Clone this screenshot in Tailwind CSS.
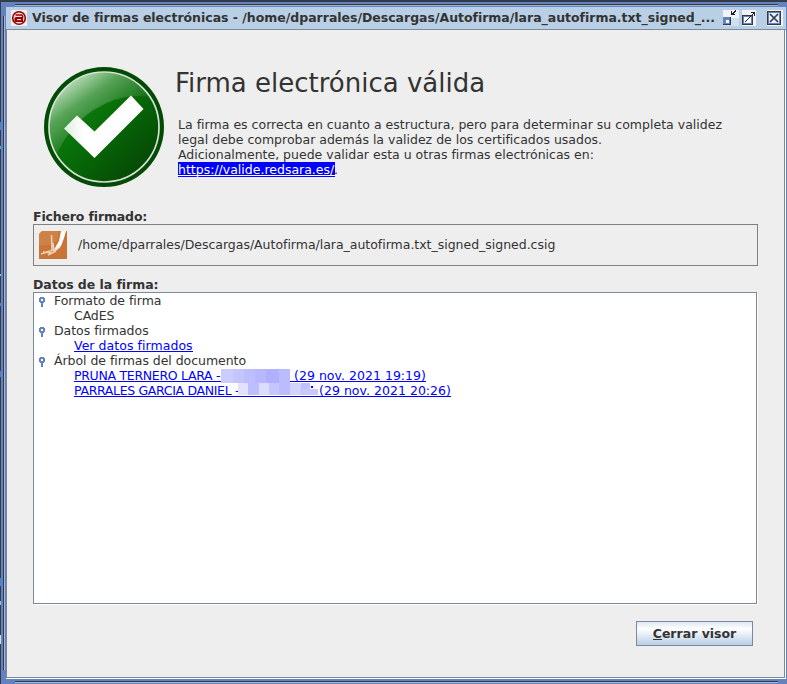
<!DOCTYPE html>
<html lang="es"><head><meta charset="utf-8"><title>Visor de firmas electrónicas</title>
<script src="https://cdn.jsdelivr.net/npm/@tailwindcss/browser@4"></script></head>
<body class="w-[787px] h-[684px] overflow-hidden bg-[#333a48] pl-px pt-0.5 font-['DejaVu_Sans',sans-serif] text-[12.5px] leading-[15px] text-[#333] whitespace-nowrap">
<!-- desktop visible beside the window -->
<div class="absolute left-0 top-0 w-px h-[684px]">
  <i class="absolute top-[122px] w-px h-[8px] bg-[#3f86d0]"></i><i class="absolute top-[146px] w-px h-[3px] bg-[#5aa5dd]"></i>
  <i class="absolute top-[274px] w-px h-[2px] bg-[#7fd4f0]"></i><i class="absolute top-[303px] w-px h-[3px] bg-[#3f86d0]"></i>
  <i class="absolute top-[371px] w-px h-[6px] bg-[#3f86d0]"></i><i class="absolute top-[578px] w-px h-[8px] bg-[#3f86d0]"></i>
  <i class="absolute top-[601px] w-px h-[4px] bg-[#7fc4f0]"></i><i class="absolute top-[635px] w-px h-[9px] bg-[#ddd]"></i>
</div>
<div class="relative w-[786px] h-[682px] bg-[#6382bf] pl-[5px] pt-[5px]">
  <div class="absolute left-[14px] right-[9px] top-[2px] h-[2px] bg-[#333a48] border-b border-[#a3b8cc]"></div>
  <div class="absolute left-[14px] right-[9px] bottom-[1px] h-[2px] bg-[#333a48] border-b border-[#a3b8cc]"></div>
  <div class="absolute left-[2px] top-[14px] bottom-[14px] w-[2px] bg-[#333a48] border-r border-[#a3b8cc]"></div>
  <div class="w-[780px] h-[672px] bg-[#eee] flex flex-col border-r border-b border-white">
    <header class="h-[23px] shrink-0 bg-[#b8cfe5] border-b border-[#7a8a99] flex items-center pl-[5px] -mr-px font-bold">
      <svg class="w-4 h-4 shrink-0" viewBox="0 0 16 16"><path fill="#eee" d="M0 0h16v16H0z"/><circle cx="8" cy="8" r="6.3" fill="#f5dede" stroke="#980000" stroke-width="1.6"/><path d="M4.5 5h5.8q1.3 0 1.3 1.3V8" fill="none" stroke="#980000" stroke-width="1.5"/><path d="M5 7h7v5H4.8Q3.5 12 3.5 10.5V8.5Q3.5 7 5 7Z" fill="#980000"/><path d="M6 9.6h4" stroke="#eee" stroke-width="1.1"/></svg>
      <span class="ml-[5px] w-[685px] mb-px tracking-[-0.02px]">Visor de firmas electrónicas - /home/dparrales/Descargas/Autofirma/lara_autofirma.txt_signed_...</span>
      <svg class="w-4 h-4 ml-[6px] shrink-0" viewBox="0 0 16 16" shape-rendering="crispEdges"><path fill="#cfdff0" d="M0 0h16v16H0z"/><path fill="#eef4fa" d="M0 0h16v8H0z"/><path fill="#333a48" d="M0 7h8v8H0z"/><path fill="#6382bf" d="M0 7h7v2H1v5H0z"/><path fill="#6382bf" d="M1 9h6v5H1z"/><path fill="#fff" d="M3 10h3v3H3z"/><path fill="#222" d="M8 1h1v4H8zM8 4h4v1H8zM9 3h2v1H9zM10 2h2v1h-2zM11 1h2v1h-2zM12 0h1v1h-1z"/></svg>
      <svg class="w-4 h-4 ml-[3px] shrink-0" viewBox="0 0 16 16" shape-rendering="crispEdges"><path fill="#eef4fa" d="M0 0h14v16H0z"/><path fill="#333a48" d="M0 5h11v10H0z"/><path fill="#6382bf" d="M1 6h9v8H1z"/><path fill="#fff" d="M2 7h7v6H2z"/><path fill="#222" d="M3 11h1v1H3zM4 10h1v1H4zM5 9h1v1H5zM6 8h1v1H6zM7 7h1v1H7zM8 6h1v1H8zM9 5h1v1H9zM10 4h1v1h-1zM11 3h1v1h-1zM9 2h4v1H9zM12 2h1v4h-1z"/></svg>
      <svg class="w-4 h-4 ml-[9px] shrink-0" viewBox="0 0 16 16" shape-rendering="crispEdges"><path fill="#eef4fa" d="M0 0h16v16H0z"/><path fill="#333a48" d="M0 1h14v14H0z"/><path fill="#6382bf" d="M1 2h12v12H1z"/><path fill="#e8f0f8" d="M2 3h10v10H2z"/><path d="M3 4l8 8M11 4l-8 8" stroke="#333a48" stroke-width="1.700" shape-rendering="auto"/></svg>
    </header>
    <main class="flex flex-col h-[648px] border-l border-b border-r border-[#7a8a99] px-[26px]">
      <section class="flex h-[179px] pt-[36px] shrink-0">
        <svg class="w-[122px] h-[122px] ml-[10px] shrink-0" viewBox="0 0 122 122">
          <defs><linearGradient id="g" x1="0" y1="0" x2="1" y2="1"><stop offset="0" stop-color="#1a901a"/><stop offset=".45" stop-color="#087008"/><stop offset="1" stop-color="#043c04"/></linearGradient>
          <linearGradient id="h" x1=".1" y1=".05" x2=".65" y2=".7"><stop offset="0" stop-color="#fff" stop-opacity=".85"/><stop offset=".45" stop-color="#fff" stop-opacity=".3"/><stop offset="1" stop-color="#fff" stop-opacity="0"/></linearGradient>
          <linearGradient id="k" x1="0" y1="0" x2="1" y2="0"><stop offset="0" stop-color="#dfeedf"/><stop offset=".25" stop-color="#fff"/></linearGradient></defs>
          <circle cx="61" cy="61" r="60" fill="#034a05"/>
          <circle cx="61" cy="61" r="55" fill="url(#g)"/>
          <path d="M14 88A54 54 0 0 1 7 67 54 54 0 0 1 106 31Q78 26 49 45 26 61 14 88Z" fill="url(#h)"/>
          <circle cx="61" cy="61" r="55" fill="none" stroke="#d5e2d5" stroke-width="1.700"/>
          <path d="M21 62.500 34 49.500 51.500 65.500 88 29.500 100.500 43 51.500 92Z" fill="url(#k)"/>
        </svg>
        <div class="pl-[10px]">
          <h1 class="pt-px text-[26px] leading-[32px]">Firma electrónica válida</h1>
          <div class="mt-[18px] pl-[3px]">
            <p class="tracking-[0.02px]">La firma es correcta en cuanto a estructura, pero para determinar su completa validez</p>
            <p>legal debe comprobar además la validez de los certificados usados.</p>
            <p>Adicionalmente, puede validar esta u otras firmas electrónicas en:</p>
            <p class="flex"><a class="relative block w-[157px] h-[15px] bg-[#00f] text-white">https://valide.redsara.es/<i class="absolute left-0 top-[13px] w-full h-px bg-white"></i></a><span class="-ml-px">.</span></p>
          </div>
        </div>
      </section>
      <p class="font-bold tracking-[-0.15px] shrink-0">Fichero firmado:</p>
      <div class="w-[725px] h-[42px] shrink-0 border border-[#808080] flex items-center pl-[5px]">
        <svg class="w-7 h-7 shrink-0" viewBox="0 0 28 28"><path fill="#c87537" d="M3 0h25v28H0V3Z"/><path fill="#d38a50" d="M3 0h17l-2 10Q8 16 0 14V3Z" opacity=".6"/><path fill="#fff" d="M22 0h5l-2 7-3 8-5 4-1-2 4-7Z"/><path d="M12.500 4l.5 15M14 12l1 8M2 23l9-3 8-3M4 21l9 1 8-6M9 24l8-4" fill="none" stroke="#f9e8d8" stroke-width="1.500" opacity=".8"/></svg>
        <span class="ml-[11px] mb-px tracking-[-0.02px]">/home/dparrales/Descargas/Autofirma/lara_autofirma.txt_signed_signed.csig</span>
      </div>
      <p class="mt-[11px] font-bold tracking-[-0.05px] shrink-0">Datos de la firma:</p>
      <div class="w-[724px] h-[312px] shrink-0 bg-white border border-[#7a8a99] shadow-[1px_1px_0_#fff]">
        <div class="flex pl-[5px]"><svg class="w-[7px] h-[11px] mt-[4px] mr-[8px]" viewBox="0 0 7 11" shape-rendering="crispEdges"><path fill="#6382bf" d="M1 0h4v1h1v4H5v1H4v4H2V6H1V5H0V1h1z"/><path fill="#fff" d="M2 2h2v2H2z"/></svg><span class="tracking-[-0.03px]">Formato de firma</span></div>
        <p class="pl-[40px] tracking-[-0.1px]">CAdES</p>
        <div class="flex pl-[5px]"><svg class="w-[7px] h-[11px] mt-[4px] mr-[8px]" viewBox="0 0 7 11" shape-rendering="crispEdges"><path fill="#6382bf" d="M1 0h4v1h1v4H5v1H4v4H2V6H1V5H0V1h1z"/><path fill="#fff" d="M2 2h2v2H2z"/></svg><span class="tracking-[-0.03px]">Datos firmados</span></div>
        <div class="pl-[40px] h-[15px]"><a class="block w-[119px] h-[14px] border-b border-[#00f] text-[#00f] tracking-[0.05px]">Ver datos firmados</a></div>
        <div class="flex pl-[5px]"><svg class="w-[7px] h-[11px] mt-[4px] mr-[8px]" viewBox="0 0 7 11" shape-rendering="crispEdges"><path fill="#6382bf" d="M1 0h4v1h1v4H5v1H4v4H2V6H1V5H0V1h1z"/><path fill="#fff" d="M2 2h2v2H2z"/></svg><span class="tracking-[-0.04px]">Árbol de firmas del documento</span></div>
        <div class="pl-[40px] h-[15px]"><a class="flex w-[352px] h-[14px] border-b border-[#00f] text-[#00f]"><span class="w-[147px] tracking-[-0.3px]">PRUNA TERNERO LARA -</span>
          <span class="flex w-[69px] h-[14px] mt-px mr-[4px]"><i class="w-[12px] bg-[#ccccff]"></i><i class="w-[11px] bg-[#c4c4ff]"></i><i class="w-[11px] bg-[#bdbdff]"></i><i class="w-[11px] bg-[#b8b8ff]"></i><i class="w-[13px] bg-[#b0b0ff]"></i><i class="w-[11px] bg-[#bbbbff]"></i></span>
          <span class="tracking-[0.03px]">(29 nov. 2021 19:19)</span></a></div>
        <div class="pl-[40px] h-[15px]"><a class="flex w-[377px] h-[14px] border-b border-[#00f] text-[#00f]"><span class="w-[164px] tracking-[-0.33px]">PARRALES GARCIA DANIEL -</span>
          <span class="relative flex w-[72px] h-[12px] mr-[9px]"><i class="w-[10px] bg-[#e2e2ff]"></i><i class="w-[11px] bg-[#bdbdff]"></i><i class="w-[10px] bg-[#dcdcff]"></i><i class="w-[10px] bg-[#c5c5ff]"></i><i class="w-[11px] bg-[#bbbbff]"></i><i class="w-[11px] bg-[#d3d3ff]"></i><i class="w-[9px] bg-[#c0c0ff]"></i><i class="absolute left-[64px] top-[6px] w-[16px] h-[6px] bg-[#c8c8ff]"></i><i class="absolute left-[73px] top-[3px] w-[2px] h-[2px] bg-[#00f]"></i></span>
          <span class="tracking-[0.03px]">(29 nov. 2021 20:26)</span></a></div>
      </div>
      <button class="self-end mt-[17px] mr-[5px] w-[117px] h-[25px] shrink-0 border border-[#7a8a99] bg-linear-to-b from-[#dde8f3] via-white via-30% to-[#b8cfe5] font-bold pb-px"><span class="relative">C<i class="absolute left-0 top-[13px] w-[9px] h-px bg-[#333]"></i></span>errar visor</button>
    </main>
  </div>
</div>
</body></html>
